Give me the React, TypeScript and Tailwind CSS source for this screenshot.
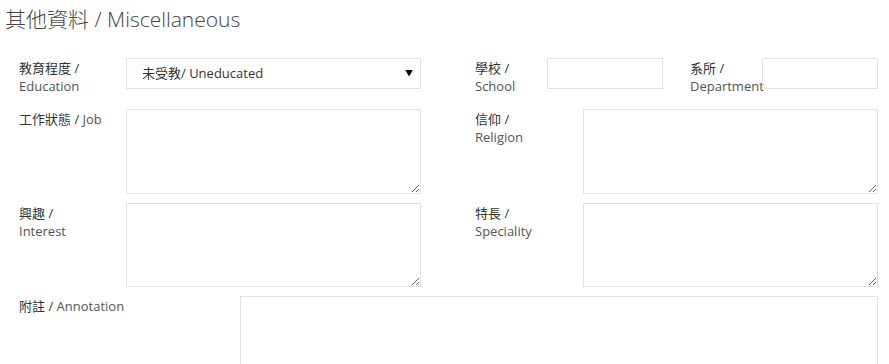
import React from "react";

const FONT = { fontFamily: '"Open Sans", "Noto Sans CJK TC", sans-serif' };

function Label({ zh, en, inline = false }: { zh: string; en: string; inline?: boolean }) {
  return (
    <label className="block pt-[1px] text-[13px] leading-[18px] text-[#333]">
      {zh} /{inline ? " " : <br />}
      <span className="text-[#555]">{en}</span>
    </label>
  );
}

function Area({ className }: { className: string }) {
  return (
    <textarea
      className={`block border border-[#e2e2e2] bg-white outline-none ${className}`}
    />
  );
}

export default function App() {
  return (
    <div className="h-[364px] w-[889px] overflow-hidden bg-white" style={FONT}>
      <h2 className="pl-[5px] pt-[5px] text-[21px] font-light leading-[28px] text-[#444]">
        其他資料 / Miscellaneous
      </h2>

      <div className="mt-[25px] flex flex-col">
        {/* education / school / department */}
        <div className="flex">
          <div className="flex w-[421px] pl-[19px]">
            <div className="w-[107px]">
              <Label zh="教育程度" en="Education" />
            </div>
            <div className="relative flex h-[31px] w-[295px] items-center border border-[#e2e2e2] pl-[15px] text-[13px] text-[#333]">
              未受教/ Uneducated
              <span className="absolute right-[7px] top-[9px] text-[8px] leading-[10px] text-black">▼</span>
            </div>
          </div>
          <div className="ml-[54px] flex">
            <div className="w-[72px]">
              <Label zh="學校" en="School" />
            </div>
            <input className="h-[31px] w-[116px] border border-[#e2e2e2] outline-none" />
            <div className="ml-[27px] w-[72px]">
              <Label zh="系所" en="Department" />
            </div>
            <input className="h-[31px] w-[116px] border border-[#e2e2e2] outline-none" />
          </div>
        </div>

        {/* job / religion */}
        <div className="mt-[14px] flex">
          <div className="flex w-[421px] pl-[19px]">
            <div className="w-[107px]">
              <Label zh="工作狀態" en="Job" inline />
            </div>
            <Area className="h-[85px] w-[295px]" />
          </div>
          <div className="ml-[54px] flex">
            <div className="w-[108px]">
              <Label zh="信仰" en="Religion" />
            </div>
            <Area className="h-[85px] w-[295px]" />
          </div>
        </div>

        {/* interest / speciality */}
        <div className="mt-[9px] flex">
          <div className="flex w-[421px] pl-[19px]">
            <div className="w-[107px]">
              <Label zh="興趣" en="Interest" />
            </div>
            <Area className="h-[84px] w-[295px]" />
          </div>
          <div className="ml-[54px] flex">
            <div className="w-[108px]">
              <Label zh="特長" en="Speciality" />
            </div>
            <Area className="h-[84px] w-[295px]" />
          </div>
        </div>

        {/* annotation */}
        <div className="mt-[9px] flex pl-[19px]">
          <div className="w-[221px]">
            <Label zh="附註" en="Annotation" inline />
          </div>
          <Area className="h-[85px] w-[638px]" />
        </div>
      </div>
    </div>
  );
}
